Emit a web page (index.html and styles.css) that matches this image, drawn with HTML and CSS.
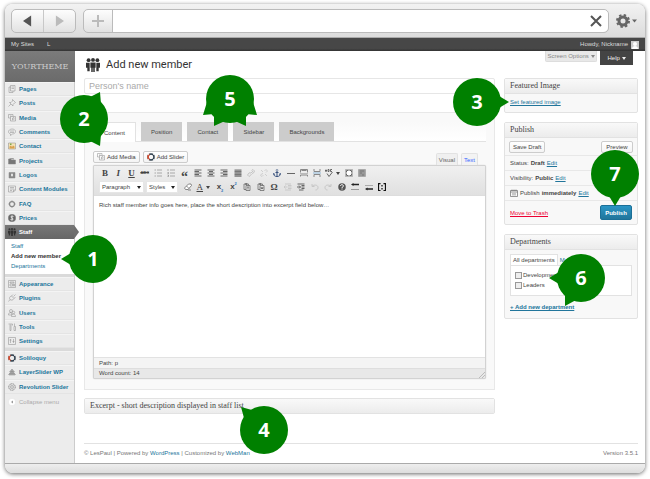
FILE: index.html
```html
<!DOCTYPE html>
<html lang="en">
<head>
<meta charset="utf-8">
<title>Add new member</title>
<link rel="stylesheet" href="styles.css">
</head>
<body>
<svg class="defs" aria-hidden="true">
  <symbol id="pages" viewBox="0 0 16 16"><path d="M5 1h9v11H5zM5 4H2v11h8v-3M7 4h5M7 7h5" /></symbol>
  <symbol id="pin" viewBox="0 0 16 16"><path d="M9 1l6 6-2 1-3 3v3L3 7h3l3-3zM6 10l-5 5" /></symbol>
  <symbol id="media" viewBox="0 0 16 16"><path d="M1 1h9v4M1 1v7h4M4 4h3M5 5h10v9H5zM9 12V8l3-1v4M8 12h1M11 11h1" /></symbol>
  <symbol id="comment" viewBox="0 0 16 16"><path d="M8 2c4 0 7 2 7 5s-3 5-6 5l-4 3v-3c-3-1-4-3-4-5s3-5 7-5zM4 6h8M4 9h8" /></symbol>
  <symbol id="contact" viewBox="0 0 16 16"><path d="M1 2h14v12H1z" fill="#f3e3b5"/><path d="M3 13V9l3-2 2 3 2-3 3 2v4z" fill="#d9a04e" stroke="none"/><path d="M4 3h3v3H4z" fill="#7da84b" stroke="none"/></symbol>
  <symbol id="folder" viewBox="0 0 16 16"><path d="M1 4h5l1 2h8v8H1zM3 3h8v2" fill="#777"/></symbol>
  <symbol id="badge" viewBox="0 0 16 16"><path d="M2 3h12v11H2z" fill="#888"/><path d="M6 5h4v6H6z" fill="#fff"/></symbol>
  <symbol id="modules" viewBox="0 0 16 16"><path d="M1 2h14v8l-4 4H1zM4 5h8M4 8h8M4 11h4M11 14v-4h4" /></symbol>
  <symbol id="ring" viewBox="0 0 16 16"><circle cx="8" cy="8" r="5" stroke-width="2.5"/><path d="M8 0v3M8 13v3M0 8h3M13 8h3" /></symbol>
  <symbol id="dollar" viewBox="0 0 16 16"><circle cx="8" cy="8" r="7.500" fill="#666"/><path d="M11 5c-5-2-7 1-3 3s2 5-3 3M8 3v10" stroke="#fff" stroke-width="1.500"/></symbol>
  <symbol id="people" viewBox="0 0 16 16"><g fill="currentColor" stroke="none"><circle cx="3" cy="2.500" r="2.200"/><circle cx="13" cy="2.500" r="2.200"/><circle cx="8" cy="2.200" r="2.200"/><path d="M0 5.500h4.200V15H1.500v-4H0zM16 5.500h-4.200V15h2.700v-4H16zM5 5h6v6h-1v5H8.300v-5h-.6v5H6v-5H5z"/></g></symbol>
  <symbol id="appearance" viewBox="0 0 16 16"><path d="M1 1h14v14H1zM4 4h8v2H4zM4 8h5v4H4zM11 8h2v4h-2z" /></symbol>
  <symbol id="plug" viewBox="0 0 16 16"><path d="M11 5l4-4M7 4l5 5c-2 4-6 4-8 2S3 5 7 4zM4 11l-3 4M12 9l3-3M7 4l3-3" /></symbol>
  <symbol id="users" viewBox="0 0 16 16"><circle cx="6" cy="4" r="3"/><circle cx="11" cy="7" r="2.500"/><path d="M1 12c0-4 2-5 5-5l2 5zM7 15c0-4 2-5 4-5s4 2 4 5z" /></symbol>
  <symbol id="tools" viewBox="0 0 16 16"><path d="M1 2h8v3M4 3v12M6 3v12M4 15h2M13 1v5M12 7h3v8h-3z" /></symbol>
  <symbol id="settings" viewBox="0 0 16 16"><path d="M1 1h14v14H1zM5 4v8M11 4v8M3 6h4M9 9h4" /></symbol>
  <symbol id="slider" viewBox="0 0 16 16"><circle cx="8" cy="8" r="6" stroke="#2f3f4d" stroke-width="3"/><path d="M5 2.800A6 6 0 0 0 5 13.200" stroke="#e8502f" stroke-width="3"/><path d="M2 2l2 2M12 12l2 2M14 2l-2 2M2 14l2-2" stroke="#fff" stroke-width="1.500"/></symbol>
  <symbol id="layers" viewBox="0 0 16 16"><path d="M3 8l5-6 5 6zM1 13l7-7 7 7zM2 14h12M3 11h10" fill="#aaa"/></symbol>
  <symbol id="gear-dot" viewBox="0 0 16 16"><circle cx="8" cy="8" r="6.500" stroke-width="2" stroke-dasharray="3 1"/><circle cx="8" cy="8" r="3.500"/><circle cx="8" cy="8" r="1"/></symbol>
  <symbol id="collapse" viewBox="0 0 16 16"><circle cx="8" cy="8" r="7.500" fill="#fff" stroke="#ddd"/><path d="M10 5v6L6 8z" fill="#999" stroke="none"/></symbol>
  <symbol id="ul" viewBox="0 0 16 16"><path d="M6 2h10M6 8h10M6 14h10M1 2h3M1 8h3M1 14h3" /></symbol>
  <symbol id="ol" viewBox="0 0 16 16"><path d="M6 2h10M6 8h10M6 14h10M2 0v4M1 7h2v2H1M1 12h2v3H1" /></symbol>
  <symbol id="left" viewBox="0 0 16 16"><path d="M1 2h14M1 5h9M1 8h14M1 11h9M1 14h14" stroke-width="2"/></symbol>
  <symbol id="center" viewBox="0 0 16 16"><path d="M1 2h14M4 5h8M1 8h14M4 11h8M1 14h14" stroke-width="2"/></symbol>
  <symbol id="right" viewBox="0 0 16 16"><path d="M1 2h14M6 5h9M1 8h14M6 11h9M1 14h14" stroke-width="2"/></symbol>
  <symbol id="full" viewBox="0 0 16 16"><path d="M1 2h14M1 5h14M1 8h14M1 11h14M1 14h14" stroke="#777" stroke-width="2.500"/></symbol>
  <symbol id="link" viewBox="0 0 16 16"><path d="M7 9l5-5M9 3l3-2 3 3-2 4-3 1M7 7L4 8l-3 4 3 3 3-2 2-3" stroke="#c4c4c4" stroke-width="2"/></symbol>
  <symbol id="unlink" viewBox="0 0 16 16"><path d="M9 4l3-3 3 3-3 3M6 9l-3 1-2 3 3 2 3-3M2 2l4 4M14 14l-4-4" stroke="#cfcfcf" stroke-width="2"/></symbol>
  <symbol id="anchor" viewBox="0 0 16 16"><path d="M8 4v11M5 7h6M1 9c0 4 3 6 7 6s7-2 7-6l-3 2M1 9l3 2" stroke="#38527f" stroke-width="2"/><circle cx="8" cy="2.500" r="1.800" stroke="#38527f"/></symbol>
  <symbol id="hr" viewBox="0 0 16 16"><path d="M0 9h16" stroke-width="2"/></symbol>
  <symbol id="more" viewBox="0 0 16 16"><path d="M1 7V1h14v6M3 3h10M1 9h2M5 9h2M9 9h2M13 9h2M1 15v-3h14v3" stroke="#888" stroke-width="2"/></symbol>
  <symbol id="break" viewBox="0 0 16 16"><path d="M2 0v5h12V0M2 16v-5h12v5" stroke="#888" stroke-width="2"/><path d="M0 8h16" stroke="#8db7d8" stroke-width="2"/></symbol>
  <symbol id="spell" viewBox="0 0 16 16"><path d="M1 5V2h2v3M6 1v4h2V1zM14 1h-3v4h3M1 4h2M4 9l4 6 7-9" stroke-width="2"/></symbol>
  <symbol id="fullscreen" viewBox="0 0 16 16"><path d="M1 1h14v14H1z" fill="#fff" stroke="#777"/><path d="M3 7V3h4M9 3h4v4M13 9v4H9M7 13H3V9" stroke="#666" stroke-width="2"/></symbol>
  <symbol id="kitchen" viewBox="0 0 16 16"><path d="M1 1h14v14H1z" fill="#aaa" stroke="#888"/><path d="M3 4h10M3 8h6M11 8h2M3 12h2M7 12h6" stroke="#666" stroke-width="2"/></symbol>
  <symbol id="eraser" viewBox="0 0 16 16"><path d="M9 2h5l1 3-7 8H3l-2-3zM5 6l5 5M8 14h6" fill="#fff" stroke-width="1.500"/></symbol>
  <symbol id="paste" viewBox="0 0 16 16"><path d="M2 2h9v3M2 2v11h4M5 1h3v2H5zM6 5h8v10H6zM8 8h4M10 8v5" stroke-width="1.500"/></symbol>
  <symbol id="pasteword" viewBox="0 0 16 16"><path d="M2 2h9v3M2 2v11h4M5 1h3v2H5zM6 5h8v10H6zM8 8l1 4 1-3 1 3 1-4" stroke-width="1.500"/></symbol>
  <symbol id="outdent" viewBox="0 0 16 16"><path d="M2 2h12M8 5h7M8 8h7M8 11h7M2 14h12M7 8H0M3 5L0 8l3 3" stroke="#c9c9c9" stroke-width="2"/></symbol>
  <symbol id="indent" viewBox="0 0 16 16"><path d="M1 2h14M9 5h6M9 8h6M9 11h6M4 14h9M0 8h7M4 5l3 3-3 3" stroke-width="2"/></symbol>
  <symbol id="undo" viewBox="0 0 16 16"><path d="M2 2v5h5M2 7c3-4 12-4 12 2 0 3-2 5-5 5" stroke="#c6c6c6" stroke-width="2"/></symbol>
  <symbol id="redo" viewBox="0 0 16 16"><path d="M14 2v5H9M14 7C11 3 2 3 2 9c0 3 2 5 5 5" stroke="#c6c6c6" stroke-width="2"/></symbol>
  <symbol id="help" viewBox="0 0 16 16"><circle cx="8" cy="8" r="7.500" fill="#555" stroke="none"/><path d="M5 6c0-4 6-3 6 0 0 2-3 1-3 4M8 11v2" stroke="#fff" stroke-width="2"/></symbol>
  <symbol id="rowup" viewBox="0 0 16 16"><path d="M4 3h12" stroke="#222" stroke-width="3"/><path d="M0 13h16" stroke="#999" stroke-width="2"/><path d="M5 0v6L0 3z" fill="#222" stroke="none"/></symbol>
  <symbol id="rowdown" viewBox="0 0 16 16"><path d="M0 5h16" stroke="#aaa" stroke-width="2"/><path d="M4 12h12" stroke="#222" stroke-width="3"/><path d="M5 9v6l-5-3z" fill="#222" stroke="none"/></symbol>
  <symbol id="shortcode" viewBox="0 0 16 16"><path d="M5 1H1v14h4M11 1h4v14h-4" stroke="#111" stroke-width="2.500"/><path d="M8 4v3M8 10v3" stroke="#111" stroke-width="2.500"/></symbol>
  <symbol id="calendar" viewBox="0 0 16 16"><path d="M1 3h14v12H1zM1 6h14M4 1v3M8 1v3M12 1v3M6 8v5M10 8v5" stroke-width="1.500"/></symbol>
</svg>

<div class="window">
  <div class="chrome">
    <div class="history">
      <button type="button" aria-label="Back"><svg viewBox="0 0 10 12"><path d="M9 0v12L0 6z" fill="#555"/></svg></button>
      <button type="button" aria-label="Forward"><svg viewBox="0 0 10 12"><path d="M1 0v12l9-6z" fill="#bbb"/></svg></button>
    </div>
    <div class="location">
      <button type="button" aria-label="New tab"><svg viewBox="0 0 12 12"><path d="M6 0v12M0 6h12" stroke="#bbb" stroke-width="2"/></svg></button>
      <input type="text" aria-label="Address">
      <button type="button" class="stop" aria-label="Stop"><svg viewBox="0 0 12 12"><path d="M1 1l10 10M11 1L1 11" stroke="#555" stroke-width="2"/></svg></button>
    </div>
    <button type="button" class="gear" aria-label="Options"><svg viewBox="0 0 21 14"><circle cx="7" cy="7" r="4" fill="none" stroke="#666" stroke-width="3"/><circle cx="7" cy="7" r="6" fill="none" stroke="#666" stroke-width="2" stroke-dasharray="2.400 2.312"/><path d="M16 5.500h5l-2.500 3z" fill="#666"/></svg></button>
  </div>

  <div class="adminbar">
    <a href="#sites">My Sites</a><a href="#l">L</a>
    <a class="account" href="#me">Howdy, Nickname <svg viewBox="0 0 8 8"><path d="M0 0h8v8H0z" fill="#ccc"/><circle cx="4" cy="3" r="2" fill="#fff"/><path d="M1 8c0-4 6-4 6 0z" fill="#fff"/></svg></a>
  </div>

  <div class="page">
    <nav class="sidebar">
      <div class="brand">YOURTHEME</div>
      <ul class="menu menu-top">
        <li><a href="#"><svg><use href="#pages"/></svg>Pages</a></li>
        <li><a href="#"><svg><use href="#pin"/></svg>Posts</a></li>
        <li><a href="#"><svg><use href="#media"/></svg>Media</a></li>
        <li><a href="#"><svg><use href="#comment"/></svg>Comments</a></li>
        <li><a href="#"><svg><use href="#contact"/></svg>Contact</a></li>
        <li><a href="#"><svg><use href="#folder"/></svg>Projects</a></li>
        <li><a href="#"><svg><use href="#badge"/></svg>Logos</a></li>
        <li><a href="#"><svg><use href="#modules"/></svg>Content Modules</a></li>
        <li><a href="#"><svg><use href="#ring"/></svg>FAQ</a></li>
        <li><a href="#"><svg><use href="#dollar"/></svg>Prices</a></li>
      </ul>
      <a class="current" href="#"><svg><use href="#people"/></svg>Staff</a>
      <ul class="submenu">
        <li><a href="#">Staff</a></li>
        <li class="active"><a href="#">Add new member</a>
          <span class="marker m1"><svg viewBox="-32 -32 64 64"><circle r="24"/><path d="M-32 0l10-6v12z"/></svg><b>1</b></span></li>
        <li><a href="#">Departments</a></li>
      </ul>
      <ul class="menu menu-mid">
        <li><a href="#"><svg><use href="#appearance"/></svg>Appearance</a></li>
        <li><a href="#"><svg><use href="#plug"/></svg>Plugins</a></li>
        <li><a href="#"><svg><use href="#users"/></svg>Users</a></li>
        <li><a href="#"><svg><use href="#tools"/></svg>Tools</a></li>
        <li><a href="#"><svg><use href="#settings"/></svg>Settings</a></li>
      </ul>
      <ul class="menu menu-end">
        <li><a href="#"><svg><use href="#slider"/></svg>Soliloquy</a></li>
        <li><a href="#"><svg><use href="#layers"/></svg>LayerSlider WP</a></li>
        <li><a href="#"><svg><use href="#gear-dot"/></svg>Revolution Slider</a></li>
      </ul>
      <button type="button" class="collapse"><svg><use href="#collapse"/></svg>Collapse menu</button>
    </nav>

    <main>
      <header>
        <h1><svg><use href="#people"/></svg>Add new member</h1>
        <div class="screen-meta">
          <button type="button" class="options">Screen Options <i class="caret"></i></button>
          <button type="button" class="helptab">Help <i class="caret"></i></button>
        </div>
      </header>

      <div class="columns">
        <div class="primary">
          <input class="title" type="text" placeholder="Person's name" aria-label="Person's name">

          <section class="metabox">
            <div class="tabs">
              <button type="button" class="on">Content</button>
              <button type="button">Position</button>
              <button type="button">Contact</button>
              <button type="button">Sidebar</button>
              <button type="button">Backgrounds</button>
              <span class="marker m2"><svg viewBox="-32 -32 64 64"><circle r="24"/><path d="M16-27L6-22l11 7zM16 27L6 22l11-7z"/></svg><b>2</b></span>
              <span class="marker m5"><svg viewBox="-32 -32 64 64"><circle r="24"/><path d="M-27 16l4-13 7 12zM27 16L23 3l-7 12zM-16 27V14l11 8zM16 27V14L5 22z"/></svg><b>5</b></span>
            </div>
            <div class="editor-top">
              <button type="button" class="btn"><svg><use href="#media"/></svg>Add Media</button>
              <button type="button" class="btn"><svg><use href="#slider"/></svg>Add Slider</button>
              <div class="modes"><button type="button" class="on">Visual</button><button type="button">Text</button></div>
            </div>
            <div class="editor">
              <div class="toolbar">
                <div class="tools tools-one">
                  <button type="button"><b>B</b></button>
                  <button type="button"><b><em>I</em></b></button>
                  <button type="button"><b><u>U</u></b></button>
                  <button type="button" class="abc"><s>ABC</s></button>
                  <button type="button" aria-label="Bullets"><svg><use href="#ul"/></svg></button>
                  <button type="button" aria-label="Numbers"><svg><use href="#ol"/></svg></button>
                  <button type="button" class="quote"><b>“</b></button>
                  <button type="button" aria-label="Left"><svg><use href="#left"/></svg></button>
                  <button type="button" aria-label="Center"><svg><use href="#center"/></svg></button>
                  <button type="button" aria-label="Right"><svg><use href="#right"/></svg></button>
                  <button type="button" aria-label="Justify"><svg><use href="#full"/></svg></button>
                  <button type="button" aria-label="Link"><svg><use href="#link"/></svg></button>
                  <button type="button" aria-label="Unlink"><svg><use href="#unlink"/></svg></button>
                  <button type="button" aria-label="Anchor"><svg><use href="#anchor"/></svg></button>
                  <button type="button" aria-label="Rule"><svg><use href="#hr"/></svg></button>
                  <button type="button" aria-label="More"><svg><use href="#more"/></svg></button>
                  <button type="button" aria-label="Page break"><svg><use href="#break"/></svg></button>
                  <button type="button" class="drop" aria-label="Spelling"><svg><use href="#spell"/></svg><i class="caret"></i></button>
                  <button type="button" aria-label="Full screen"><svg><use href="#fullscreen"/></svg></button>
                  <button type="button" aria-label="Kitchen sink"><svg><use href="#kitchen"/></svg></button>
                </div>
                <div class="second">
                  <label class="pick pick-wide"><select aria-label="Format"><option>Paragraph</option></select></label>
                  <label class="pick"><select aria-label="Styles"><option>Styles</option></select></label>
                  <div class="tools tools-two">
                    <button type="button" aria-label="Clear"><svg><use href="#eraser"/></svg></button>
                    <button type="button" class="drop"><u>A</u><i class="caret"></i></button>
                    <button type="button" class="script"><b>x<sub>2</sub></b></button>
                    <button type="button" class="script"><b>x<sup>2</sup></b></button>
                    <button type="button" aria-label="Paste text"><svg><use href="#paste"/></svg></button>
                    <button type="button" aria-label="Paste from Word"><svg><use href="#pasteword"/></svg></button>
                    <button type="button"><b>Ω</b></button>
                    <button type="button" aria-label="Outdent"><svg><use href="#outdent"/></svg></button>
                    <button type="button" aria-label="Indent"><svg><use href="#indent"/></svg></button>
                    <button type="button" aria-label="Undo"><svg><use href="#undo"/></svg></button>
                    <button type="button" aria-label="Redo"><svg><use href="#redo"/></svg></button>
                    <button type="button" aria-label="Help"><svg><use href="#help"/></svg></button>
                    <button type="button" aria-label="Row before"><svg><use href="#rowup"/></svg></button>
                    <button type="button" aria-label="Row after"><svg><use href="#rowdown"/></svg></button>
                    <button type="button" aria-label="Shortcode"><svg><use href="#shortcode"/></svg></button>
                  </div>
                </div>
              </div>
              <textarea aria-label="Content">Rich staff member info goes here, place the short description into excerpt field below…</textarea>
              <div class="path">Path: p</div>
              <div class="count"><span>Word count: 14</span><svg viewBox="0 0 6 6"><path d="M0 6l6-6M3 6l3-3" stroke="#bbb"/></svg></div>
            </div>
          </section>

          <section class="excerpt"><h2>Excerpt - short description displayed in staff list</h2>
            <span class="marker m4"><svg viewBox="-32 -32 64 64"><circle r="24"/><path d="M-23-23l11 3-8 8z"/></svg><b>4</b></span>
          </section>
        </div>

        <aside>
          <section class="box">
            <h2>Featured Image</h2>
            <div class="featured"><a href="#">Set featured image</a></div>
            <span class="marker m3"><svg viewBox="-32 -32 64 64"><circle r="24"/><path d="M32 0l-10-6v12z"/></svg><b>3</b></span>
          </section>

          <section class="box">
            <h2>Publish</h2>
            <div class="row actions"><button type="button" class="btn">Save Draft</button><button type="button" class="btn">Preview</button></div>
            <div class="row">Status: <b>Draft</b> <a href="#">Edit</a></div>
            <div class="row">Visibility: <b>Public</b> <a href="#">Edit</a></div>
            <div class="row"><svg><use href="#calendar"/></svg> Publish <b>immediately</b> <a href="#">Edit</a></div>
            <div class="row submit"><a class="trash" href="#">Move to Trash</a><button type="button" class="primary-btn">Publish</button></div>
            <span class="marker m7"><svg viewBox="-32 -32 64 64"><circle r="24"/><path d="M0 32l-6-10H6z"/></svg><b>7</b></span>
          </section>

          <section class="box">
            <h2>Departments</h2>
            <div class="dept">
              <div class="dept-tabs"><button type="button" class="on">All departments</button><button type="button">Most Used</button></div>
              <div class="checks">
                <label><input type="checkbox">Development</label>
                <label><input type="checkbox">Leaders</label>
              </div>
              <a class="add" href="#">+ Add new department</a>
            </div>
            <span class="marker m6"><svg viewBox="-32 -32 64 64"><circle r="24"/><path d="M-32 0l10-6v12zM-16 28V14l11 8z"/></svg><b>6</b></span>
          </section>
        </aside>
      </div>

      <footer>
        <span>© LesPaul | Powered by <a href="#">WordPress</a> | Customized by <a href="#">WebMan</a></span>
        <span>Version 3.5.1</span>
      </footer>
    </main>
  </div>
  <div class="bottombar"></div>
</div>
</body>
</html>
```
FILE: styles.css
```css
* { box-sizing: border-box; }
body {
  margin: 0;
  padding: 4px 5px 5px;
  background: #fff;
  color: #444;
  font: 6px/10px "Liberation Sans", Arial, sans-serif;
}
button, input, select, textarea { margin: 0; padding: 0; font: inherit; color: inherit; }
button { border: 0; background: none; white-space: nowrap; }
ul { list-style: none; margin: 0; padding: 0; }
h1, h2 { margin: 0; }
a { color: #21759b; }
svg { fill: none; }
.defs { display: none; }
.caret {
  display: inline-block;
  border: 2px solid transparent;
  border-top: 3px solid currentColor;
  border-bottom: 0;
}

.window {
  border-radius: 8px;
  background: #fff;
  box-shadow: 0 1px 4px rgba(0, 0, 0, .6);
}

/* Browser chrome */
.chrome {
  display: flex;
  align-items: center;
  gap: 7px;
  height: 34px;
  padding: 0 8px 0 6px;
  border-radius: 8px 8px 0 0;
  border-bottom: 1px solid #aaa;
  background: linear-gradient(#f2f2f2, #dcdcdc);
}
.history, .location {
  display: flex;
  height: 24px;
  border: 1px solid #bbb;
  border-radius: 5px;
  background: linear-gradient(#fdfdfd, #e2e2e2);
}
.history { width: 65px; }
.history button { flex: 1; display: grid; place-items: center; }
.history button + button { border-left: 1px solid #c8c8c8; }
.history svg { width: 9px; height: 12px; }
.location { flex: 1; }
.location button { width: 28px; display: grid; place-items: center; }
.location svg { width: 12px; height: 12px; }
.location input { flex: 1; min-width: 0; border: 0; border-left: 1px solid #bbb; background: #fff; font-size: 9px; }
.location .stop { width: 24px; background: #fff; border-radius: 0 5px 5px 0; }
.gear svg { display: block; width: 21px; height: 14px; }

/* Admin bar */
.adminbar {
  display: flex;
  height: 13px;
  align-items: center;
  padding: 0 6px;
  gap: 13px;
  background: linear-gradient(#474747 80%, #333);
  line-height: 13px;
}
.adminbar a { color: #ddd; text-decoration: none; }
.account { display: flex; align-items: center; gap: 3px; margin-left: auto; }
.account svg { width: 8px; height: 8px; }

.page { display: flex; }

/* Sidebar */
.sidebar {
  width: 70px;
  flex: none;
  border-right: 1px solid #ccc;
  background: #ececec;
}
.brand {
  height: 31px;
  margin-right: -1px;
  background: linear-gradient(#7b7b7b, #6b6b6b);
  color: #ccc;
  font: 8px/31px "DejaVu Serif", serif;
  text-align: center;
}
.menu { display: flex; flex-direction: column; }
.menu-top { height: 143px; }
.menu-mid { height: 74px; border-top: 3px solid #dadada; }
.menu-end { height: 46px; border-top: 3px solid #dadada; }
.menu li { flex: 1; display: flex; border-top: 1px solid #f4f4f4; border-bottom: 1px solid #e4e4e4; }
.menu a, .current, .collapse {
  display: flex;
  align-items: center;
  gap: 3px;
  padding-left: 3px;
  font-weight: bold;
  text-decoration: none;
  white-space: nowrap;
}
.menu svg, .current svg, .collapse svg { width: 8px; height: 8px; flex: none; stroke: #888; }
.current {
  position: relative;
  height: 14px;
  background: linear-gradient(#777, #666);
  color: #fff;
}
.current svg { color: #333; }
.current::after {
  content: "";
  position: absolute;
  left: 100%;
  top: 0;
  border: 7px solid transparent;
  border-left: 5px solid #6e6e6e;
  border-right: 0;
}
.submenu { padding: 2px 0 2px 6px; height: 35px; background: #fff; }
.submenu li { position: relative; }
.submenu a { text-decoration: none; }
.submenu .active a { color: #333; font-weight: bold; }
.collapse { height: 15px; color: #aaa; font-weight: normal; }

/* Main column */
main { flex: 1; min-width: 0; padding: 0 7px 0 9px; }
header { display: flex; justify-content: space-between; align-items: flex-start; height: 27px; }
h1 {
  display: flex;
  align-items: center;
  gap: 6px;
  height: 27px;
  padding-left: 2px;
  color: #333;
  font: 11px/27px Roboto, sans-serif;
}
h1 svg { width: 14px; height: 14px; }
.screen-meta { display: flex; align-items: flex-start; gap: 3px; padding-right: 5px; }
.options { width: 52px; height: 11px; border: 1px solid #ddd; border-top: 0; border-radius: 0 0 2px 2px; background: #e8e8e8; color: #888; }
.helptab { width: 33px; height: 14px; background: #444; color: #eee; }

.columns { display: grid; grid-template-columns: minmax(0, 1fr) 134px; gap: 9px; align-items: start; }
.title {
  display: block;
  width: 100%;
  height: 16px;
  padding: 0 4px;
  border: 1px solid #e6e6e6;
  border-radius: 2px;
  background: #fff;
  font-size: 9px;
}
.title::placeholder { color: #aaa; opacity: 1; }

.metabox { margin-top: 18px; padding: 9px 8px 10px; border: 1px solid #e8e8e8; background: #f9f9f9; }
.tabs {
  position: relative;
  display: flex;
  gap: 5px;
  height: 20px;
  border-bottom: 1px solid #e2e2e2;
  background: linear-gradient(#f9f9f9, #fff);
}
.tabs button { height: 19px; min-width: 41px; padding: 0 10px; background: #ccc; }
.tabs .on { height: 20px; border: 1px solid #e2e2e2; border-bottom: 0; background: #fff; }

.editor-top { display: flex; gap: 3px; margin-top: 9px; height: 14px; }
.btn {
  display: flex;
  align-items: center;
  justify-content: center;
  gap: 2px;
  height: 12px;
  padding: 0 3px;
  border: 1px solid #ccc;
  border-radius: 2px;
  background: linear-gradient(#fff, #f4f4f4);
}
.btn svg { width: 8px; height: 8px; stroke: #888; }
.modes { display: flex; align-items: flex-end; gap: 3px; margin-left: auto; padding-right: 8px; }
.modes button { height: 12px; padding: 0 2px; border: 1px solid #e2e2e2; border-bottom: 0; border-radius: 2px 2px 0 0; background: #f3f3f3; color: #36f; }
.modes .on { background: #f0f0f0; color: #666; }

.editor { border: 1px solid #d2d2d2; border-radius: 2px; background: #fff; box-shadow: 0 0 1px #bbb; }
.toolbar { height: 30px; padding: 0 6px; border-bottom: 1px solid #ddd; background: linear-gradient(#f0f0f0, #e0e0e0); }
.tools { display: flex; justify-content: space-between; align-items: center; height: 14px; }
.tools-one { width: 267px; }
.tools-two { width: 204px; margin-left: 3px; }
.tools button { width: 10px; height: 10px; display: flex; align-items: center; justify-content: center; font: 9px/10px "Liberation Serif", serif; }
.tools svg { width: 8px; height: 8px; flex: none; stroke: #666; }
.tools .drop { width: 15px; gap: 3px; justify-content: flex-start; }
.tools .abc { font: bold 4px/10px "Liberation Sans", sans-serif; }
.tools .quote { height: 6px; font-size: 14px; line-height: 14px; align-items: flex-start; }
.tools .script { font: 8px/10px "Liberation Sans", sans-serif; }
.script sub, .script sup { font-size: 4px; line-height: 0; color: #37b; }
.second { display: flex; align-items: center; gap: 2px; height: 14px; }
.pick { position: relative; display: flex; width: 32px; height: 12px; background: #fff; }
.pick-wide { width: 45px; margin-left: -1px; }
.pick select { width: 100%; height: 12px; padding: 0 2px; border: 1px solid #e6e6e6; background: none; appearance: none; }
.pick::after {
  content: "";
  position: absolute;
  right: 3px;
  top: 5px;
  border: 2px solid transparent;
  border-top: 3px solid #222;
  border-bottom: 0;
}
textarea { display: block; width: 100%; height: 161px; padding: 4px 5px; border: 0; resize: none; outline: 0; background: #fff; }
.path { height: 11px; padding: 0 5px; border-top: 1px solid #e2e2e2; background: #f4f4f4; }
.count { display: flex; justify-content: space-between; align-items: flex-end; height: 10px; padding: 0 0 0 5px; border-top: 1px solid #dedede; background: #e8e8e8; line-height: 9px; }
.count svg { width: 6px; height: 6px; }

.box, .excerpt { position: relative; border: 1px solid #e2e2e2; border-radius: 2px; background: #f8f8f8; }
h2 {
  height: 15px;
  padding: 0 5px;
  border-bottom: 1px solid #e2e2e2;
  background: linear-gradient(#f9f9f9, #ececec);
  font: 8px/14px "Liberation Serif", Georgia, serif;
}
.excerpt { margin-top: 8px; }
.excerpt h2 { height: 14px; border: 0; }

/* Right column */
aside { display: grid; gap: 9px; }
.featured { height: 18px; padding: 3px 5px; }
.row { display: flex; align-items: center; gap: 2px; height: 15px; padding: 0 5px; border-bottom: 1px solid #e8e8e8; }
.row svg { width: 8px; height: 8px; stroke: #777; }
.row.actions { height: 18px; justify-content: space-between; padding: 0 4px; }
.row.submit { height: 23px; justify-content: space-between; border: 0; }
.actions .btn { min-width: 32px; }
.trash { color: #e03; }
.primary-btn {
  width: 32px;
  height: 15px;
  border: 1px solid #1b6f97;
  border-radius: 2px;
  background: linear-gradient(#2a95c5, #21759b);
  color: #fff;
  font-weight: bold;
}
.dept { padding: 4px 5px 6px; }
.dept-tabs { display: flex; }
.dept-tabs button { height: 11px; padding: 0 2px; color: #21759b; }
.dept-tabs .on { border: 1px solid #e2e2e2; border-bottom: 0; background: #fff; color: #444; }
.checks { display: grid; align-content: start; height: 31px; padding: 4px; border: 1px solid #e2e2e2; background: #fff; }
.checks label { display: flex; align-items: center; gap: 1px; height: 10px; }
.checks input { appearance: none; width: 7px; height: 7px; border: 1px solid #999; background: #eee; }
.add { display: inline-block; margin-top: 6px; font-weight: bold; }

footer {
  display: flex;
  justify-content: space-between;
  height: 20px;
  margin-top: 29px;
  border-top: 1px solid #e2e2e2;
  color: #777;
  line-height: 19px;
}
footer a { text-decoration: none; }
.bottombar { height: 10px; border-top: 1px solid #aaa; border-radius: 0 0 8px 8px; background: linear-gradient(#eee, #ddd); }

/* Numbered callouts lying over the page */
.marker {
  position: absolute;
  z-index: 5;
  display: grid;
  place-items: center;
  width: 64px;
  height: 64px;
  color: #fff;
  font: 20px/28px "Open Sans", sans-serif;
  pointer-events: none;
}
.marker svg { grid-area: 1 / 1; width: 64px; height: 64px; fill: green; }
.marker b { grid-area: 1 / 1; z-index: 1; }
.m1 { left: 50px; top: -24px; }
.m2 { left: -41px; top: -35px; }
.m5 { left: 105px; top: -55px; }
.m4 { left: 147px; top: -1px; }
.m3 { right: 128px; top: -9px; }
.m7 { right: -10px; top: 19px; }
.m6 { right: 24px; top: 11px; }
```
